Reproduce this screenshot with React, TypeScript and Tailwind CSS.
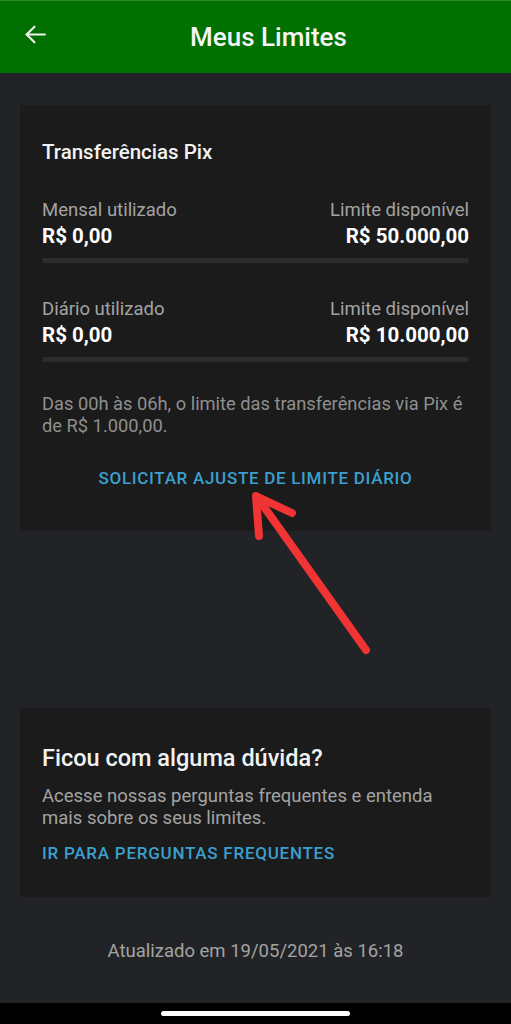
import React from 'react';

function LimitRow({ label, used, available, top }: { label: string; used: string; available: string; top: string }) {
  return (
    <div className={top}>
      <div className="flex justify-between items-end">
        <div>
          <p className="text-[18.5px] leading-[24px] text-[#a3a3a3]">{label}</p>
          <p className="text-[20.5px] leading-[28px] font-bold text-white">{used}</p>
        </div>
        <div className="text-right">
          <p className="text-[18.5px] leading-[24px] text-[#a3a3a3]">Limite disponível</p>
          <p className="text-[20.5px] leading-[28px] font-bold text-white">{available}</p>
        </div>
      </div>
      <div className="mt-[8px] h-[5px] rounded-full bg-[#2b2c2e]" />
    </div>
  );
}

export default function App() {
  return (
    <div
      className="relative w-[511px] h-[1024px] bg-[#212326] flex flex-col overflow-hidden"
      style={{ fontFamily: 'Roboto, "Noto Sans", sans-serif' }}
    >
      <header className="h-[73px] shrink-0 bg-[#007000] border-t border-[#2a8a2a] relative flex items-center justify-center">
        <svg
          className="absolute left-[23px] top-[21px]"
          width="25"
          height="25"
          viewBox="0 0 24 24"
          fill="none"
          stroke="#f2f2f2"
          strokeWidth="2"
          strokeLinecap="round"
          strokeLinejoin="round"
        >
          <path d="M21 12H3.5" />
          <path d="M11 4.5 3.5 12l7.5 7.5" />
        </svg>
        <h1 className="text-[26px] font-medium text-[#f5f5f5] mt-[1px] ml-[26px]">Meus Limites</h1>
      </header>

      <main className="flex-1 flex flex-col px-[20px]">
        <section className="mt-[32px] bg-[#1b1b1b] px-[22px] pt-[32px] pb-[41px]">
          <h2 className="text-[20.5px] font-medium text-[#f2f2f2] leading-[30px]">Transferências Pix</h2>
          <LimitRow top="mt-[31px]" label="Mensal utilizado" used="R$ 0,00" available="R$ 50.000,00" />
          <LimitRow top="mt-[34px]" label="Diário utilizado" used="R$ 0,00" available="R$ 10.000,00" />
          <p className="mt-[31px] text-[18.3px] leading-[22px] text-[#8f8f8f]">
            Das 00h às 06h, o limite das transferências via Pix é de R$ 1.000,00.
          </p>
          <p className="mt-[29px] text-center text-[17px] leading-[24px] font-medium text-[#3b9fcf] tracking-[0.7px]">
            SOLICITAR AJUSTE DE LIMITE DIÁRIO
          </p>
        </section>

        <section className="mt-[177px] bg-[#1b1b1b] px-[22px] pt-[35px] pb-[32px]">
          <h2 className="text-[23.5px] font-medium text-[#f2f2f2] leading-[30px]">Ficou com alguma dúvida?</h2>
          <p className="mt-[12px] text-[18.5px] leading-[22px] text-[#a3a3a3]">
            Acesse nossas perguntas frequentes e entenda mais sobre os seus limites.
          </p>
          <p className="mt-[12px] text-[17px] leading-[24px] font-medium text-[#3b9fcf] tracking-[0.75px]">
            IR PARA PERGUNTAS FREQUENTES
          </p>
        </section>

        <p className="mt-[41px] text-center text-[18.5px] leading-[26px] text-[#a3a3a3]">
          Atualizado em 19/05/2021 às 16:18
        </p>
      </main>

      <div className="h-[21px] shrink-0 bg-black flex justify-center pt-[8px]">
        <div className="w-[189px] h-[5px] rounded-full bg-white" />
      </div>

      <svg className="absolute left-0 top-0 pointer-events-none" width="511" height="1024">
        <g stroke="#f03434" strokeWidth="8" strokeLinecap="round" strokeLinejoin="round" fill="none">
          <path d="M366 650 L257 497" />
          <path d="M259 536 L256 496 L292 513" />
        </g>
      </svg>
    </div>
  );
}
